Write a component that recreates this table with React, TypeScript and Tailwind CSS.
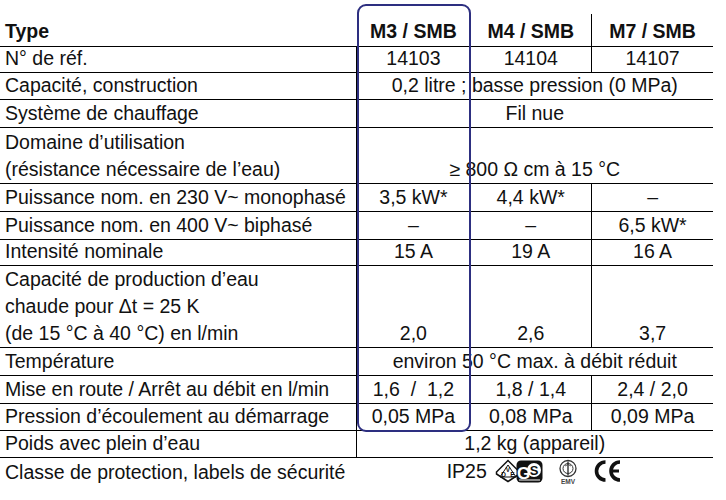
import React from "react";

type Row = {
  label: string[];
  values?: string[];
  span?: React.ReactNode;
  h: string;
  last?: boolean;
};

const VdeGsLogo = () => (
  <svg width="48" height="24" viewBox="0 0 48 24" className="shrink-0">
    <polygon
      points="1.5,13 13,1.5 24.5,13 24.5,15 13,22.5 1.5,15"
      fill="#fff"
      stroke="#111"
      strokeWidth="1.5"
    />
    <polygon points="5,18 13,6 21,18" fill="none" stroke="#111" strokeWidth="1" />
    <text x="13" y="12.5" fontSize="6.5" textAnchor="middle" fontFamily="Liberation Sans, sans-serif" fontWeight="700" fill="#111">
      V
    </text>
    <text x="8.5" y="17.5" fontSize="6.5" textAnchor="middle" fontFamily="Liberation Sans, sans-serif" fontWeight="700" fill="#111">
      D
    </text>
    <text x="17.5" y="17.5" fontSize="6.5" textAnchor="middle" fontFamily="Liberation Sans, sans-serif" fontWeight="700" fill="#111">
      E
    </text>
    <rect x="21.5" y="1.5" width="26" height="22" rx="4.5" fill="#111" />
    <text x="28.5" y="19.5" fontSize="17" textAnchor="middle" fontFamily="Liberation Sans, sans-serif" fontWeight="700" fill="#fff">
      G
    </text>
    <circle cx="39" cy="11" r="7" fill="#fff" />
    <text x="39" y="16" fontSize="13" textAnchor="middle" fontFamily="Liberation Sans, sans-serif" fontWeight="700" fill="#111">
      S
    </text>
    <rect x="24" y="20.5" width="21" height="1" fill="#fff" />
  </svg>
);

const EmvLogo = () => (
  <svg width="26" height="26" viewBox="0 0 26 26" className="shrink-0">
    <circle cx="13" cy="9.5" r="8" fill="none" stroke="#333" strokeWidth="1.3" />
    <circle cx="13" cy="9.5" r="5" fill="none" stroke="#333" strokeWidth="1" />
    <line x1="13" y1="2.5" x2="13" y2="16.5" stroke="#333" strokeWidth="1.4" />
    <path d="M10 7 Q13 4 16 7" fill="none" stroke="#333" strokeWidth="0.8" />
    <text x="13" y="25" fontSize="6.5" textAnchor="middle" fontFamily="Liberation Sans, sans-serif" fontWeight="700" fill="#444">
      EMV
    </text>
  </svg>
);

const CeLogo = () => (
  <svg width="30" height="24" viewBox="0 0 30 24" className="shrink-0">
    <path d="M12.5 3 A9 9 0 0 0 12.5 21" fill="none" stroke="#111" strokeWidth="3.6" />
    <path d="M27 3 A9 9 0 0 0 27 21" fill="none" stroke="#111" strokeWidth="3.6" />
    <line x1="19" y1="12" x2="26" y2="12" stroke="#111" strokeWidth="3" />
  </svg>
);

const rows: Row[] = [
  { label: ["N° de réf."], values: ["14103", "14104", "14107"], h: "h-[26px]" },
  { label: ["Capacité, construction"], span: "0,2 litre ; basse pression (0 MPa)", h: "h-[27px]" },
  { label: ["Système de chauffage"], span: "Fil nue", h: "h-[28px]" },
  {
    label: ["Domaine d’utilisation", "(résistance nécessaire de l’eau)"],
    span: "≥ 800 Ω cm à 15 °C",
    h: "h-[56px]",
  },
  { label: ["Puissance nom. en 230 V~ monophasé"], values: ["3,5 kW*", "4,4 kW*", "–"], h: "h-[28px]" },
  { label: ["Puissance nom. en 400 V~ biphasé"], values: ["–", "–", "6,5 kW*"], h: "h-[28px]" },
  { label: ["Intensité nominale"], values: ["15 A", "19 A", "16 A"], h: "h-[26px]" },
  {
    label: ["Capacité de production d’eau", "chaude pour Δt = 25 K", "(de 15 °C à 40 °C) en l/min"],
    values: ["2,0", "2,6", "3,7"],
    h: "h-[82px]",
  },
  { label: ["Température"], span: "environ 50 °C max. à débit réduit", h: "h-[28px]" },
  { label: ["Mise en route / Arrêt au débit en l/min"], values: ["1,6  /  1,2", "1,8 / 1,4", "2,4 / 2,0"], h: "h-[28px]" },
  { label: ["Pression d’écoulement au démarrage"], values: ["0,05 MPa", "0,08 MPa", "0,09 MPa"], h: "h-[27px]" },
  { label: ["Poids avec plein d’eau"], span: "1,2 kg (appareil)", h: "h-[27px]" },
  {
    label: ["Classe de protection, labels de sécurité"],
    span: (
      <div className="flex items-center justify-center pb-[1px]">
        <span className="mr-[8px] leading-[27px]">IP25</span>
        <VdeGsLogo />
        <span className="ml-[12px] mt-[2px]">
          <EmvLogo />
        </span>
        <span className="ml-[12px]">
          <CeLogo />
        </span>
      </div>
    ),
    h: "h-[28px]",
    last: true,
  },
];

const cellBase = "flex flex-col justify-end leading-[27px] whitespace-pre";

export default function App() {
  return (
    <div
      className="min-h-screen bg-white text-[#111] text-[19.5px]"
      style={{ fontFamily: '"Liberation Sans", Arial, sans-serif' }}
    >
      <div className="relative w-[713px]">
        {/* header */}
        <div className="flex items-end h-[47px] border-b border-black font-bold">
          <div className={`${cellBase} w-[357px] pl-[5px] pb-[1px]`}>Type</div>
          <div className={`${cellBase} w-[114px] items-center pb-[1px]`}>M3 / SMB</div>
          <div className={`${cellBase} w-[122px] h-[32px] items-center border-r border-black pb-[1px]`}>
            M4 / SMB
          </div>
          <div className={`${cellBase} w-[121px] items-center pb-[1px]`}>M7 / SMB</div>
        </div>

        {rows.map((row, i) => (
          <div key={i} className={`flex ${row.h} ${row.last ? "" : "border-b border-black"}`}>
            <div className={`${cellBase} w-[357px] pl-[5px] ${row.last ? "" : "border-r border-black"}`}>
              {row.label.map((l, j) => (
                <span key={j}>{l}</span>
              ))}
            </div>
            {row.span !== undefined ? (
              <div className={`${cellBase} w-[357px] items-center`}>{row.span}</div>
            ) : (
              <>
                <div className={`${cellBase} w-[114px] items-center`}>{row.values![0]}</div>
                <div className={`${cellBase} w-[122px] items-center border-r border-black`}>
                  {row.values![1]}
                </div>
                <div className={`${cellBase} w-[121px] items-center`}>{row.values![2]}</div>
              </>
            )}
          </div>
        ))}

        {/* highlighted M3 column */}
        <div className="absolute left-[357px] top-[4px] w-[114px] h-[428px] border-2 border-[#2d2f80] rounded-[9px] pointer-events-none" />
      </div>
    </div>
  );
}
